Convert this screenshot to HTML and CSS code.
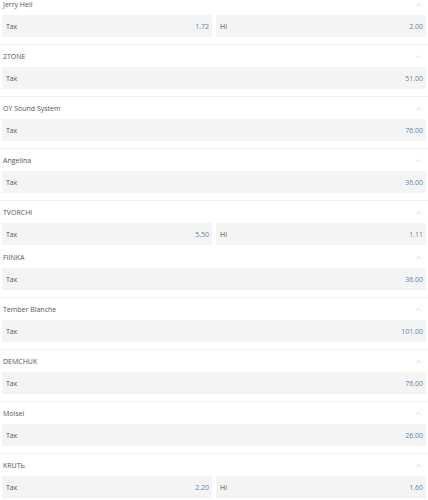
FILE: index.html
```html
<!DOCTYPE html>
<html>
<head>
<meta charset="utf-8">
<link rel="stylesheet" href="styles.css">
</head>
<body>
<div class="list">
  <section class="market">
    <div class="head"><span class="title">Jerry Heil</span><svg class="chev" width="5" height="3" viewBox="0 0 5 3"><polyline points="0.5,2.6 2.5,0.6 4.5,2.6" fill="none" stroke="#c6c6c6" stroke-width="0.7"/></svg></div>
    <div class="row">
      <div class="cell"><span class="lbl">Так</span><span class="odd">1.72</span></div>
      <div class="cell"><span class="lbl">Ні</span><span class="odd">2.00</span></div>
    </div>
  </section>
  <section class="market">
    <div class="head"><span class="title">2TONE</span><svg class="chev" width="5" height="3" viewBox="0 0 5 3"><polyline points="0.5,2.6 2.5,0.6 4.5,2.6" fill="none" stroke="#c6c6c6" stroke-width="0.7"/></svg></div>
    <div class="row">
      <div class="cell"><span class="lbl">Так</span><span class="odd">51.00</span></div>
    </div>
  </section>
  <section class="market">
    <div class="head"><span class="title">OY Sound System</span><svg class="chev" width="5" height="3" viewBox="0 0 5 3"><polyline points="0.5,2.6 2.5,0.6 4.5,2.6" fill="none" stroke="#c6c6c6" stroke-width="0.7"/></svg></div>
    <div class="row">
      <div class="cell"><span class="lbl">Так</span><span class="odd">76.00</span></div>
    </div>
  </section>
  <section class="market">
    <div class="head"><span class="title">Angelina</span><svg class="chev" width="5" height="3" viewBox="0 0 5 3"><polyline points="0.5,2.6 2.5,0.6 4.5,2.6" fill="none" stroke="#c6c6c6" stroke-width="0.7"/></svg></div>
    <div class="row">
      <div class="cell"><span class="lbl">Так</span><span class="odd">36.00</span></div>
    </div>
  </section>
  <section class="market market--tight">
    <div class="head"><span class="title">TVORCHI</span><svg class="chev" width="5" height="3" viewBox="0 0 5 3"><polyline points="0.5,2.6 2.5,0.6 4.5,2.6" fill="none" stroke="#c6c6c6" stroke-width="0.7"/></svg></div>
    <div class="row">
      <div class="cell"><span class="lbl">Так</span><span class="odd">5.50</span></div>
      <div class="cell"><span class="lbl">Ні</span><span class="odd">1.11</span></div>
    </div>
  </section>
  <section class="market">
    <div class="head"><span class="title">FIINKA</span><svg class="chev" width="5" height="3" viewBox="0 0 5 3"><polyline points="0.5,2.6 2.5,0.6 4.5,2.6" fill="none" stroke="#c6c6c6" stroke-width="0.7"/></svg></div>
    <div class="row">
      <div class="cell"><span class="lbl">Так</span><span class="odd">36.00</span></div>
    </div>
  </section>
  <section class="market">
    <div class="head"><span class="title">Tember Blanche</span><svg class="chev" width="5" height="3" viewBox="0 0 5 3"><polyline points="0.5,2.6 2.5,0.6 4.5,2.6" fill="none" stroke="#c6c6c6" stroke-width="0.7"/></svg></div>
    <div class="row">
      <div class="cell"><span class="lbl">Так</span><span class="odd">101.00</span></div>
    </div>
  </section>
  <section class="market">
    <div class="head"><span class="title">DEMCHUK</span><svg class="chev" width="5" height="3" viewBox="0 0 5 3"><polyline points="0.5,2.6 2.5,0.6 4.5,2.6" fill="none" stroke="#c6c6c6" stroke-width="0.7"/></svg></div>
    <div class="row">
      <div class="cell"><span class="lbl">Так</span><span class="odd">76.00</span></div>
    </div>
  </section>
  <section class="market">
    <div class="head"><span class="title">Moisei</span><svg class="chev" width="5" height="3" viewBox="0 0 5 3"><polyline points="0.5,2.6 2.5,0.6 4.5,2.6" fill="none" stroke="#c6c6c6" stroke-width="0.7"/></svg></div>
    <div class="row">
      <div class="cell"><span class="lbl">Так</span><span class="odd">26.00</span></div>
    </div>
  </section>
  <section class="market">
    <div class="head"><span class="title">KRUTЬ</span><svg class="chev" width="5" height="3" viewBox="0 0 5 3"><polyline points="0.5,2.6 2.5,0.6 4.5,2.6" fill="none" stroke="#c6c6c6" stroke-width="0.7"/></svg></div>
    <div class="row">
      <div class="cell"><span class="lbl">Так</span><span class="odd">2.20</span></div>
      <div class="cell"><span class="lbl">Ні</span><span class="odd">1.60</span></div>
    </div>
  </section>
</div>
</body>
</html>
```

FILE: styles.css
```css
html, body {
  margin: 0;
  padding: 0;
  background: #ffffff;
  overflow: hidden;
}
body {
  font-family: "Open Sans", "Noto Sans", sans-serif;
  font-size: 7px;
  color: #555555;
}
.list {
  margin-top: -7px;
}
.market {
  padding-bottom: 7px;
  border-bottom: 1px solid #efefef;
}
.market--tight {
  padding-bottom: 1px;
  border-bottom: none;
}
.head {
  height: 22px;
  display: flex;
  align-items: center;
  justify-content: space-between;
  padding: 0 7px 0 3px;
}
.title {
  color: #555555;
}
.chev {
  display: block;
}
.row {
  display: flex;
  gap: 4px;
  padding: 0 2px;
}
.cell {
  flex: 1;
  height: 22px;
  background: #f4f4f4;
  display: flex;
  align-items: center;
  justify-content: space-between;
  padding: 0 3px 0 4px;
}
.lbl {
  color: #555555;
}
.odd {
  color: #5a87ad;
}
```
